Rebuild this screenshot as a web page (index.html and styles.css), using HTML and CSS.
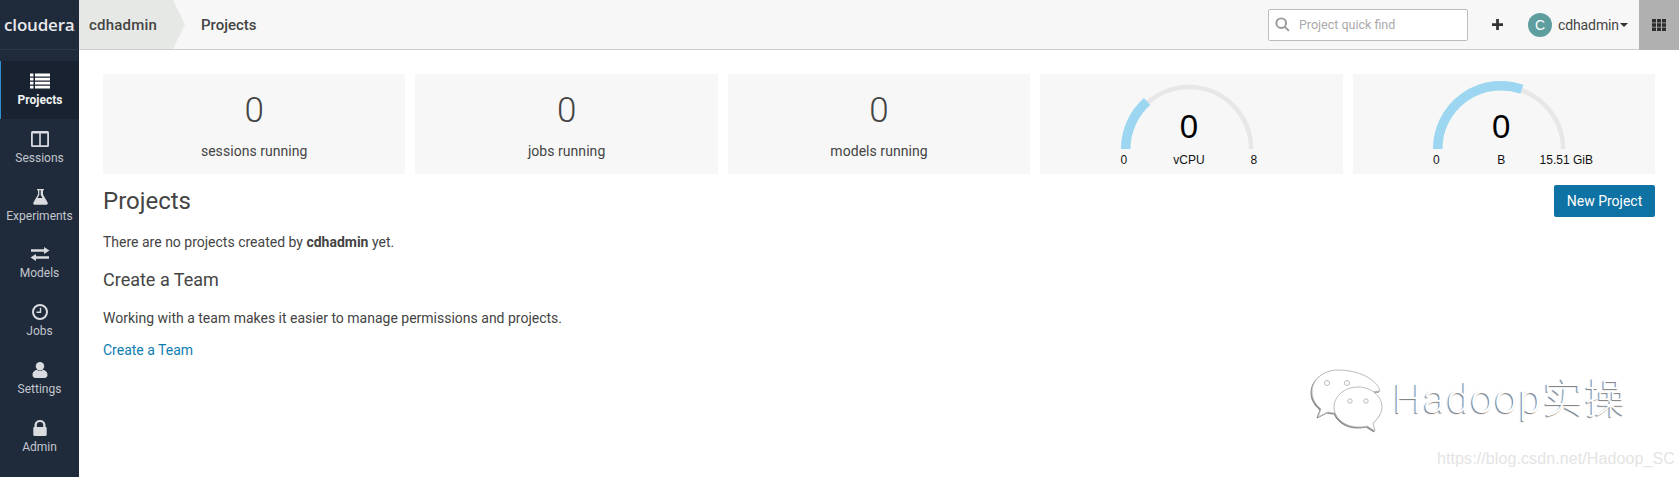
FILE: index.html
```html
<!DOCTYPE html>
<html lang="en">
<head>
    <meta charset="UTF-8">
    <meta name="viewport" content="width=device-width, initial-scale=1.0">
    <title>Projects</title>
    <link rel="stylesheet" href="styles.css">
</head>
<body>
    <div class="app">
        <!-- Sidebar -->
        <nav class="sidebar">
            <div class="logo">cloudera<span class="logo-mark">.</span></div>
            <div class="nav-list">
                <a class="nav-item active">
                    <svg class="nav-icon" viewBox="0 0 20 16"><path d="M0 0.5h3.500v3H0zM5 0.5h15v3H5zM0 4.700h3.500v2.800H0zM5 4.700h15v2.800H5zM0 8.700h3.500v2.800H0zM5 8.700h15v2.800H5zM0 12.700h3.500v2.800H0zM5 12.700h15v2.800H5z"/></svg>
                    <span>Projects</span>
                </a>
                <a class="nav-item">
                    <svg class="nav-icon" viewBox="0 0 20 16"><path fill-rule="evenodd" d="M2.500 0h15a1.500 1.500 0 0 1 1.500 1.500v13a1.500 1.500 0 0 1-1.500 1.500h-15a1.500 1.500 0 0 1-1.500-1.500v-13a1.500 1.500 0 0 1 1.500-1.500zM2.800 2.400V14.300h6.400V2.400zM10.800 2.400V14.300h6.400V2.400z"/></svg>
                    <span>Sessions</span>
                </a>
                <a class="nav-item">
                    <svg class="nav-icon" viewBox="0 0 20 16"><path fill-rule="evenodd" d="M6 0h8v1.200h-1v4.300l4.600 8.100c.5 1-.1 2.100-1.200 2.100H4.600c-1.100 0-1.700-1.100-1.200-2.100L8 5.500V1.200H7v-1.200h-1zM9.300 1.200v4.700L7.500 9h5l-1.800-3.100V1.200z"/></svg>
                    <span>Experiments</span>
                </a>
                <a class="nav-item">
                    <svg class="nav-icon" viewBox="0 0 20 16"><path d="M14 1l5.500 3.500L14 8V5.700H1V3.300h13zM6 8v2.300h13v2.400H6V15L.5 11.500z"/></svg>
                    <span>Models</span>
                </a>
                <a class="nav-item">
                    <svg class="nav-icon" viewBox="0 0 20 16"><path fill-rule="evenodd" d="M10 0a8 8 0 1 1 0 16a8 8 0 0 1 0-16zM10 2a6 6 0 1 0 0 12a6 6 0 0 0 0-12zM9.800 3.800h1.400v5.200H6.500V7.600h3.300z"/></svg>
                    <span>Jobs</span>
                </a>
                <a class="nav-item">
                    <svg class="nav-icon" viewBox="0 0 20 16"><circle cx="10" cy="4.200" r="4.200"/><path d="M2.500 13c0-3.500 2.500-5 4.500-5 1 .8 2 1.100 3 1.100s2-.3 3-1.100c2 0 4.500 1.500 4.500 5 0 2-1.500 3-3 3H5.500c-1.500 0-3-1-3-3z"/></svg>
                    <span>Settings</span>
                </a>
                <a class="nav-item">
                    <svg class="nav-icon" viewBox="0 0 20 16"><path fill-rule="evenodd" d="M4.500 7V5a5.500 5 0 0 1 11 0v2c.8 0 1.200.5 1.200 1.200v6.600c0 .7-.4 1.200-1.200 1.200h-11c-.8 0-1.200-.5-1.200-1.200V8.200C3.300 7.500 3.700 7 4.500 7zM6.800 7h6.400V5a3.200 3 0 0 0-6.400 0z"/></svg>
                    <span>Admin</span>
                </a>
            </div>
        </nav>

        <div class="page">
            <!-- Top bar -->
            <header class="topbar">
                <div class="crumb-user">cdhadmin</div>
                <div class="crumb-page">Projects</div>
                <div class="search">
                    <svg class="search-icon" viewBox="0 0 14 14"><circle cx="5.800" cy="5.800" r="4.500"/><path d="M9.200 9.200L13 13"/></svg>
                    <span>Project quick find</span>
                </div>
                <svg class="plus" viewBox="0 0 12 12"><path d="M4.500 0h3v4.500H12v3H7.500V12h-3V7.500H0v-3h4.500z"/></svg>
                <div class="avatar">C</div>
                <div class="user-name">cdhadmin</div>
                <div class="caret"></div>
                <div class="apps">
                    <svg viewBox="0 0 14 12"><path d="M0 0h4v3.500H0zM5 0h4v3.500H5zM10 0h4v3.500h-4zM0 4.300h4v3.400H0zM5 4.300h4v3.400H5zM10 4.300h4v3.400h-4zM0 8.500h4V12H0zM5 8.500h4V12H5zM10 8.500h4V12h-4z"/></svg>
                </div>
            </header>

            <main class="content">
                <!-- Summary cards -->
                <section class="cards">
                    <div class="card">
                        <div class="stat-num">0</div>
                        <div class="stat-label">sessions running</div>
                    </div>
                    <div class="card">
                        <div class="stat-num">0</div>
                        <div class="stat-label">jobs running</div>
                    </div>
                    <div class="card">
                        <div class="stat-num">0</div>
                        <div class="stat-label">models running</div>
                    </div>
                    <div class="card gauge-card">
                        <div class="gauge">
                            <svg class="gauge-svg" viewBox="0 0 136 70">
                                <path class="gauge-track" d="M6 69A62 62 0 0 1 130 69"/>
                                <path class="gauge-fill" d="M4.700 69A63.300 63.300 0 0 1 26.100 21.500"/>
                            </svg>
                            <div class="gauge-num">0</div>
                        </div>
                        <div class="gauge-labels">
                            <span>0</span>
                            <span>vCPU</span>
                            <span>8</span>
                        </div>
                    </div>
                    <div class="card gauge-card">
                        <div class="gauge">
                            <svg class="gauge-svg" viewBox="0 0 136 70">
                                <path class="gauge-track" d="M6 69A62 62 0 0 1 130 69"/>
                                <path class="gauge-fill" d="M4.700 69A63.300 63.300 0 0 1 88.900 9.200"/>
                            </svg>
                            <div class="gauge-num">0</div>
                        </div>
                        <div class="gauge-labels">
                            <span>0</span>
                            <span>B</span>
                            <span>15.51 GiB</span>
                        </div>
                    </div>
                </section>

                <div class="title-row">
                    <h1>Projects</h1>
                    <button class="btn-new">New Project</button>
                </div>
                <p class="empty-msg">There are no projects created by <strong>cdhadmin</strong> yet.</p>
                <h2>Create a Team</h2>
                <p class="team-msg">Working with a team makes it easier to manage permissions and projects.</p>
                <a class="team-link">Create a Team</a>
            </main>
        </div>

        <!-- Watermark over the page -->
        <div class="watermark">
            <svg class="wm-icon" viewBox="0 0 72 64">
                <path d="M27 1C13 1 1 10 1 23c0 7 4 13 9 17l-3 8 10-5c3 1 6 1 9 1 8 0 14-1 19-5 3-10 13-17 24-17C66 10 47 1 27 1z"/>
                <path d="M47 18c-13 0-24 9-24 20s11 20 24 20c3 0 6 0 9-1l8 5-2-8c5-4 9-10 9-16 0-11-11-20-24-20z"/>
                <circle cx="16" cy="14" r="2.500"/>
                <circle cx="36" cy="14" r="2.500"/>
                <circle cx="39" cy="32" r="2.200"/>
                <circle cx="55" cy="32" r="2.200"/>
            </svg>
            <span class="wm-text">Hadoop实操</span>
        </div>
        <div class="wm-url">https://blog.csdn.net/Hadoop_SC</div>
    </div>
</body>
</html>
```

FILE: styles.css
```css
/* Base styles */
body {
    margin: 0;
    background: #fff;
    color: #444;
    font-family: Roboto, "Noto Sans CJK SC", sans-serif;
    font-size: 14px;
    overflow: hidden;
}

.app {
    position: relative;
    display: flex;
    height: 477px;
    overflow: hidden;
}

/* Sidebar */
.sidebar {
    width: 79px;
    flex-shrink: 0;
    background: #1f2a3b;
}

.logo {
    height: 49px;
    border-bottom: 1px solid #2c3748;
    color: #e8e9eb;
    font-family: "Open Sans", sans-serif;
    font-size: 17px;
    font-weight: 600;
    letter-spacing: -0.2px;
    line-height: 49px;
    text-align: center;
    white-space: nowrap;
}

.logo-mark {
    font-size: 6px;
    margin-left: -1px;
}

.nav-list {
    padding-top: 11px;
}

.nav-item {
    display: flex;
    flex-direction: column;
    align-items: center;
    height: 57.800px;
    padding-top: 12px;
    box-sizing: border-box;
    color: #c3c7cd;
    font-size: 12px;
}

.nav-item.active {
    background: #182231;
    border-left: 1px solid #2f8fd0;
    color: #f2f3f4;
    font-weight: 700;
}

.nav-icon {
    width: 20px;
    height: 16px;
    margin-bottom: 4px;
    fill: #d9dbdf;
}

.nav-item.active .nav-icon {
    fill: #fff;
}

/* Top bar */
.page {
    flex: 1;
    min-width: 0;
}

.topbar {
    display: flex;
    align-items: center;
    height: 49px;
    background: #f7f7f7;
    border-bottom: 1px solid #ccc;
}

.crumb-user {
    align-self: stretch;
    width: 106px;
    padding-left: 10px;
    box-sizing: border-box;
    background: #e6e8e6;
    clip-path: polygon(0 0, 94px 0, 100% 50%, 94px 100%, 0 100%);
    font-size: 15px;
    font-weight: 500;
    line-height: 50px;
    letter-spacing: 0.2px;
}

.crumb-page {
    flex: 1;
    padding-left: 16px;
    font-size: 15px;
    font-weight: 500;
}

.search {
    display: flex;
    align-items: center;
    width: 198px;
    height: 30px;
    margin-right: 24px;
    background: #fff;
    border: 1px solid #bdbdbd;
    border-radius: 2px;
    color: #aaa;
    font-size: 12.500px;
}

.search-icon {
    width: 15px;
    height: 15px;
    margin: 0 9px 0 6px;
    fill: none;
    stroke: #999;
    stroke-width: 1.800;
}

.plus {
    width: 11px;
    height: 11px;
    margin-right: 25px;
    fill: #333;
}

.avatar {
    width: 24px;
    height: 24px;
    margin-right: 6px;
    border-radius: 50%;
    background: #5f9e9f;
    color: #fff;
    font-family: "Liberation Sans", sans-serif;
    font-size: 14px;
    line-height: 24px;
    text-align: center;
}

.user-name {
    letter-spacing: -0.1px;
}

.caret {
    width: 0;
    height: 0;
    margin-left: 1px;
    border-left: 4px solid transparent;
    border-right: 4px solid transparent;
    border-top: 4px solid #333;
}

.apps {
    display: flex;
    align-items: center;
    justify-content: center;
    align-self: stretch;
    width: 40px;
    margin-left: 11px;
    margin-bottom: -1px;
    background: #b0b0b0;
}

.apps svg {
    width: 14px;
    height: 12px;
    fill: #2e2e2e;
}

/* Content */
.content {
    padding: 24px 24px 0;
}

.cards {
    display: grid;
    grid-template-columns: repeat(5, 1fr);
    gap: 10px;
}

.card {
    height: 100px;
    background: #f7f7f7;
    text-align: center;
}

.stat-num {
    padding-top: 16px;
    color: #444;
    font-size: 35px;
    font-weight: 300;
    line-height: 42px;
}

.stat-label {
    margin-top: 9px;
    font-size: 14px;
    letter-spacing: 0.05px;
    line-height: 20px;
}

.gauge-card {
    display: flex;
    flex-direction: column;
    align-items: center;
    box-sizing: border-box;
    padding-right: 5px;
    font-family: "Liberation Sans", sans-serif;
    color: #111;
}

.gauge {
    position: relative;
    width: 136px;
    height: 70px;
    margin-top: 6px;
}

.gauge-svg {
    display: block;
    width: 136px;
    height: 70px;
    fill: none;
}

.gauge-track {
    stroke: #e8e6e7;
    stroke-width: 4.500;
}

.gauge-fill {
    stroke: #9dd6f0;
    stroke-width: 9.500;
}

.gauge-num {
    position: absolute;
    left: 0;
    right: 0;
    bottom: 4px;
    font-size: 33px;
    line-height: 38px;
    color: #000;
}

.gauge-labels {
    display: grid;
    grid-template-columns: repeat(3, 65px);
    width: 195px;
    font-size: 12px;
    line-height: 16px;
    margin-top: 2px;
}

.title-row {
    display: flex;
    justify-content: space-between;
    align-items: center;
    height: 32px;
    margin-top: 11px;
}

h1 {
    margin: 0;
    font-size: 24px;
    font-weight: 400;
}

.btn-new {
    width: 101px;
    height: 32px;
    padding: 0;
    border: none;
    border-radius: 2px;
    background: #0f72a4;
    color: #fff;
    font-family: inherit;
    font-size: 14px;
}

.empty-msg {
    margin: 15px 0 0;
    line-height: 20px;
}

h2 {
    margin: 16px 0 0;
    font-size: 18px;
    font-weight: 400;
    line-height: 24px;
}

.team-msg {
    margin: 16px 0 0;
    line-height: 20px;
}

.team-link {
    display: block;
    margin-top: 12px;
    color: #0f7cb0;
    line-height: 20px;
}

/* Watermark */
.watermark {
    position: absolute;
    left: 1311px;
    top: 366px;
    display: flex;
    align-items: center;
    gap: 10px;
}

.wm-icon {
    width: 72px;
    height: 64px;
    fill: #fff;
    stroke: #bbb;
    stroke-width: 1;
    filter: drop-shadow(-0.5px 1px 0.5px #888);
}

.wm-text {
    margin-bottom: 10px;
    color: #fff;
    font-size: 40.500px;
    font-weight: 300;
    letter-spacing: 1.500px;
    text-shadow: -1px 1px 1px #777;
}

.wm-url {
    position: absolute;
    left: 1437px;
    top: 449px;
    color: #e4e4e4;
    font-family: "Liberation Sans", sans-serif;
    font-size: 16px;
    letter-spacing: 0.1px;
    line-height: 20px;
}
```
